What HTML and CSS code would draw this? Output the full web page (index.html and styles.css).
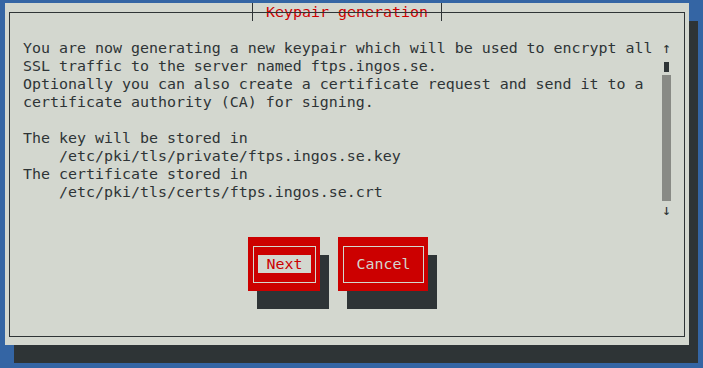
FILE: index.html
```html
<!DOCTYPE html>
<html lang="en">
<head>
    <meta charset="UTF-8">
    <meta name="viewport" content="width=device-width, initial-scale=1.0">
    <title>Keypair generation</title>
    <link rel="stylesheet" href="styles.css">
</head>
<body>
    <div class="screen">
        <div class="dialog">
            <div class="title">Keypair generation</div>
            <div class="frame">
                <div class="content">
                    <div class="textbox">You are now generating a new keypair which will be used to encrypt all
SSL traffic to the server named ftps.ingos.se.
Optionally you can also create a certificate request and send it to a
certificate authority (CA) for signing.

The key will be stored in
    /etc/pki/tls/private/ftps.ingos.se.key
The certificate stored in
    /etc/pki/tls/certs/ftps.ingos.se.crt</div>
                    <!-- scrollbar column -->
                    <div class="scrollbar">
                        <div class="arrow">↑</div>
                        <div class="thumb-row"><div class="thumb"></div></div>
                        <div class="track"></div>
                        <div class="arrow">↓</div>
                    </div>
                </div>
                <div class="buttons">
                    <div class="btn btn-next">
                        <div class="btn-frame"><span class="label active">Next</span></div>
                    </div>
                    <div class="btn btn-cancel">
                        <div class="btn-frame"><span class="label">Cancel</span></div>
                    </div>
                </div>
            </div>
        </div>
    </div>
</body>
</html>
```

FILE: styles.css
```css
body {
    margin: 0;
    width: 703px;
    height: 368px;
    overflow: hidden;
    background-color: #3465a4;
    font-family: "DejaVu Sans Mono", "Liberation Mono", monospace;
    font-size: 14.95px;
    line-height: 18px;
    color: #2e3436;
}
.screen {
    padding: 3px 0 0 5px;
}
.dialog {
    position: relative;
    width: 684px;
    height: 342px;
    background-color: #d3d7cf;
    box-shadow: 9px 18px 0 #2e3436;
}
.title {
    position: absolute;
    top: 0;
    left: 247px;
    width: 190px;
    height: 18px;
    box-sizing: border-box;
    padding-left: 13px;
    border-left: 1px solid #2e3436;
    border-right: 1px solid #2e3436;
    background-color: #d3d7cf;
    color: #cc0000;
    white-space: pre;
}
.frame {
    position: relative;
    top: 9px;
    left: 4px;
    width: 676px;
    height: 325px;
    box-sizing: border-box;
    border: 1px solid #2e3436;
    padding: 26px 0 0 13px;
}
.content {
    display: grid;
    grid-template-columns: 639px 9px;
}
.textbox {
    white-space: pre;
    height: 180px;
}
.scrollbar {
    display: flex;
    flex-direction: column;
}
.arrow {
    height: 18px;
    text-align: center;
}
.thumb-row {
    height: 18px;
    display: flex;
    justify-content: center;
    padding-top: 5px;
    box-sizing: border-box;
}
.thumb {
    width: 5px;
    height: 10px;
    background-color: #2e3436;
}
.track {
    height: 126px;
    background-color: #888a85;
}
.buttons {
    display: flex;
    gap: 18px;
    margin: 18px 0 0 225px;
}
.btn {
    height: 54px;
    box-sizing: border-box;
    padding: 9px 4px 8px 5px;
    background-color: #cc0000;
    box-shadow: 9px 18px 0 #2e3436;
}
.btn-next {
    width: 72px;
}
.btn-cancel {
    width: 90px;
}
.btn-frame {
    height: 37px;
    box-sizing: border-box;
    border: 1px solid #d3d7cf;
    display: flex;
    align-items: center;
    justify-content: center;
}
.label {
    white-space: pre;
    color: #d3d7cf;
    padding: 0 9px;
    height: 18px;
    margin-top: -1px;
}
.label.active {
    background-color: #d3d7cf;
    color: #cc0000;
}
```
